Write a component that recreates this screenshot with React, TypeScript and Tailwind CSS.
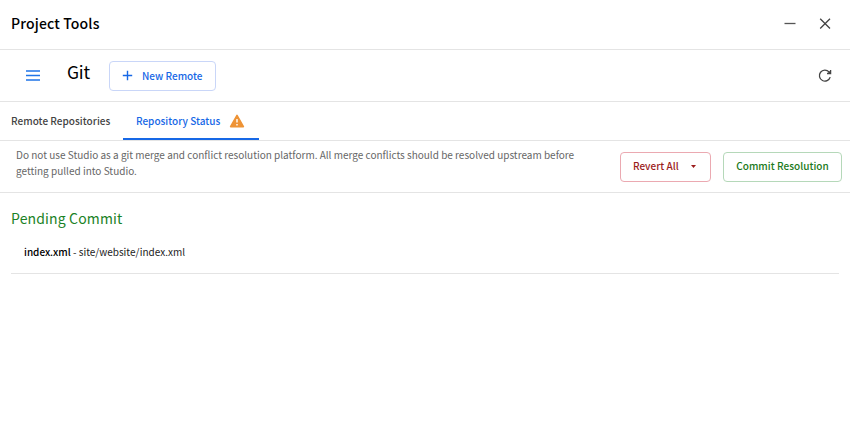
import React from 'react';

const Alert = () => (
  <svg className="h-4 w-4 shrink-0" viewBox="0 0 16 16">
    <path d="M8 2.4 14.4 13.6H1.6Z" fill="#ee9335" stroke="#ee9335" strokeWidth="1.6" strokeLinejoin="round" />
    <path d="M8 6v3.6M8 11v1.5" stroke="#fff" strokeWidth="1.4" />
  </svg>
);

export default function App() {
  return (
    <div className="h-[425px] w-[850px] overflow-hidden bg-white font-['Noto_Sans_CJK_SC','Noto_Sans',sans-serif] text-[#222]">
      <header className="flex h-[50px] items-center border-b border-[#e4e4e4] pb-[3px] pl-[11px] pr-[18px]">
        <h1 className="flex-1 text-[14px] font-medium leading-5 tracking-[0.15px] text-black">Project Tools</h1>
        <svg className="mr-[21px] h-3.5 w-3.5" viewBox="0 0 14 14" stroke="#555" strokeWidth="1.3">
          <path d="M1.5 7.5h11" />
        </svg>
        <svg className="h-3.5 w-3.5" viewBox="0 0 14 14" stroke="#444" strokeWidth="1.3">
          <path d="m2.2 2.7 9.8 9.8M12 2.7 2.2 12.5" />
        </svg>
      </header>
      <div className="flex h-[52px] items-center border-b border-[#e4e4e4] pl-[26px] pr-[18px]">
        <svg className="h-3.5 w-3.5" viewBox="0 0 14 14" stroke="#1f74e8" strokeWidth="1.4">
          <path d="M0 2h14M0 6.5h14M0 11h14" />
        </svg>
        <h2 className="ml-[27px] w-[42px] pb-[8px] text-[17.5px] leading-6 tracking-[-0.2px] text-black">Git</h2>
        <button className="flex h-[30px] w-[107px] items-center rounded-[4px] border border-[#c9d6f8] pl-3 text-[10px] font-medium leading-4 text-[#1768e6]">
          <svg className="mr-[9px] h-[11px] w-[11px]" viewBox="0 0 11 11" stroke="#1768e6" strokeWidth="1.4">
            <path d="M.8 5.5h9.4M5.5.8v9.4" />
          </svg>
          <span className="whitespace-nowrap">New Remote</span>
        </button>
        <svg className="ml-auto h-3.5 w-3.5" viewBox="0 0 14 14" fill="none" stroke="#444" strokeWidth="1.3">
          <path d="M12.2 8.1A5.5 5.5 0 1 1 11 2.9L12.6 4.5M12.6.9v3.6H9" />
          <path d="M12.6 1.3v3.2H9.4Z" fill="#444" stroke="none" />
        </svg>
      </div>
      <nav className="flex h-[39px] border-b border-[#e4e4e4] text-[10px] font-medium leading-4">
        <div className="flex w-[123px] items-center whitespace-nowrap pl-[11px] tracking-[0.03px] text-[#444]">Remote Repositories</div>
        <div className="flex w-[136px] items-center justify-between whitespace-nowrap border-b-2 border-[#1768e6] pl-[13px] pr-[14px] pt-[2px] text-[#1768e6]">
          <span>Repository Status</span>
          <Alert />
        </div>
      </nav>
      <section className="flex h-[52px] items-center border-b border-[#e4e4e4] pl-4 pr-2">
        <p className="whitespace-nowrap pb-[7px] text-[10px] leading-4 text-[#666]">
          Do not use Studio as a git merge and conflict resolution platform. All merge conflicts should be resolved upstream before
          <br />
          getting pulled into Studio.
        </p>
        <button className="ml-auto flex h-[30px] w-[91px] items-center justify-between rounded-[4px] border border-[#eba9b1] pb-px pl-3 pr-[14px] text-[10px] font-medium leading-4 text-[#9b1c1c]">
          <span>Revert All</span>
          <svg className="h-[3px] w-[5px]" viewBox="0 0 5 3" fill="#9b1c1c">
            <path d="M0 0h5L2.5 3Z" />
          </svg>
        </button>
        <button className="ml-3 flex h-[30px] w-[119px] items-center justify-center whitespace-nowrap rounded-[4px] border border-[#b5d8b9] pb-px text-[10px] font-medium leading-4 tracking-[0.03px] text-[#1b7a20]">
          Commit Resolution
        </button>
      </section>
      <main className="px-[11px] pt-[13px]">
        <h2 className="text-[14px] leading-6 tracking-[0.15px] text-[#1b8226]">Pending Commit</h2>
        <div className="flex h-[44px] items-center border-b border-[#e4e4e4] pl-[13px] text-[10px] leading-4 text-[#222]">
          <span className="whitespace-pre"><span className="font-medium text-black">index.xml</span> - site/website/index.xml</span>
        </div>
      </main>
    </div>
  );
}
